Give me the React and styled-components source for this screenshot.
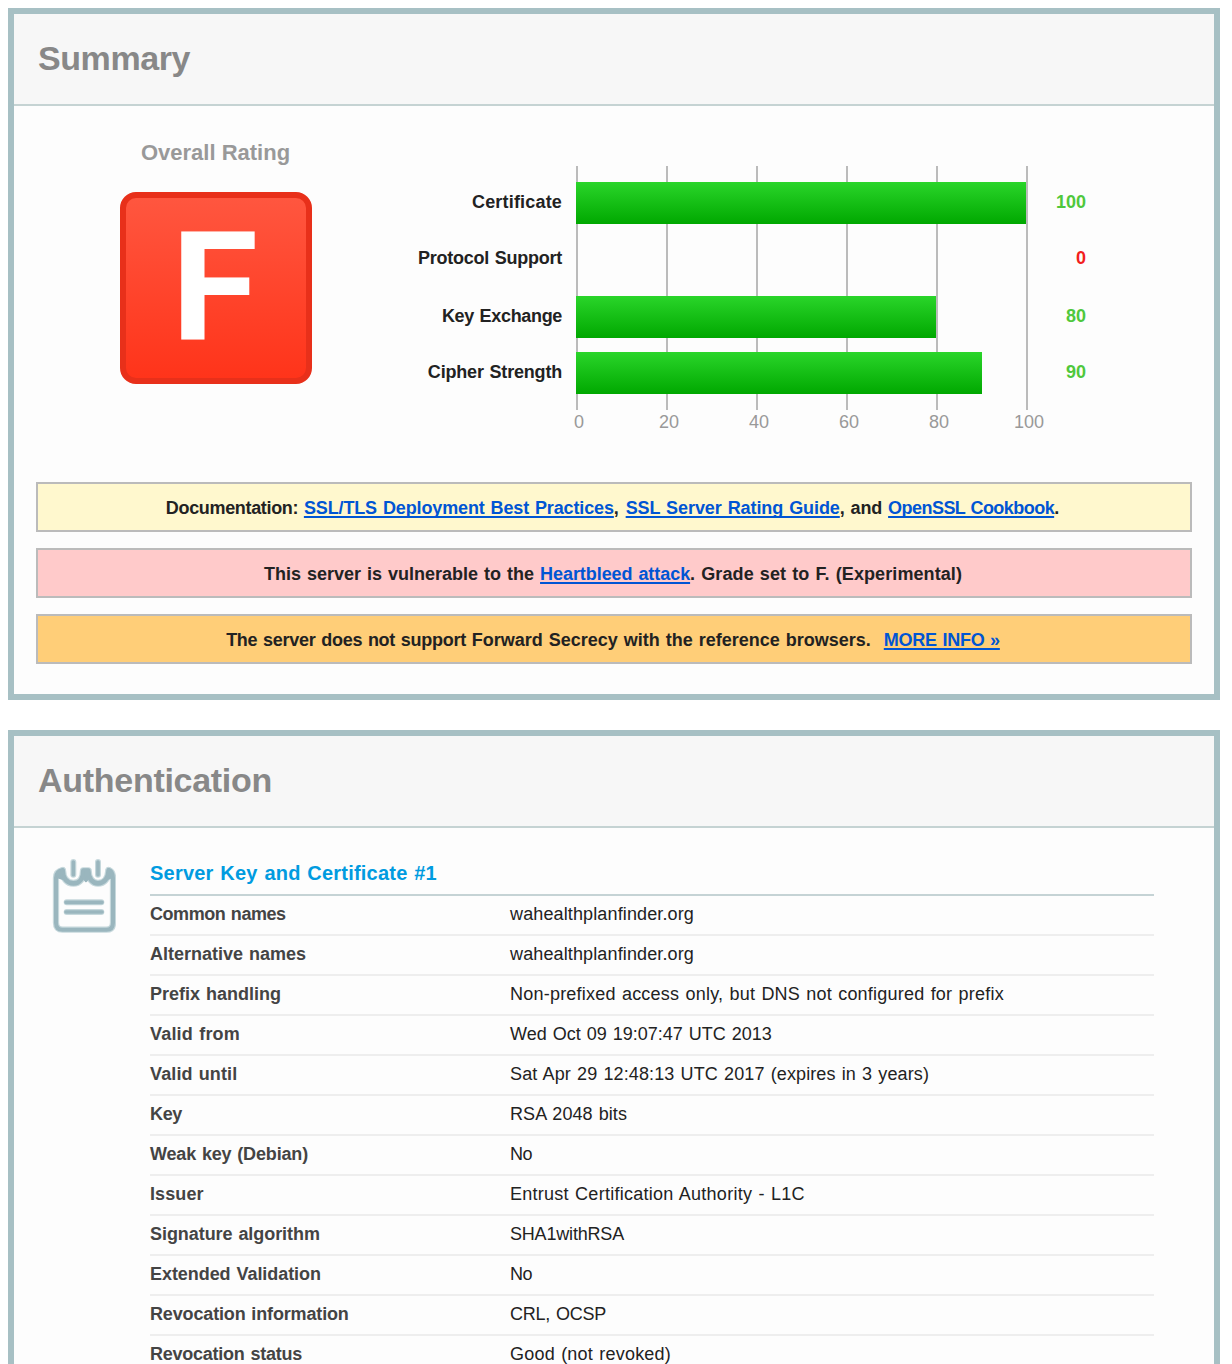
import React from "react";
import styled, { createGlobalStyle } from "styled-components";

const GlobalStyle = createGlobalStyle`
  * { box-sizing: border-box; }
  body {
    margin: 0;
    background: #fff;
    color: #222;
    font-family: "Liberation Sans", Arial, Helvetica, sans-serif;
    font-size: 18px;
    word-spacing: 1px;
  }
`;

const Page = styled.main`
  display: flex;
  flex-direction: column;
  gap: 30px;
  width: 1232px;
  height: 1364px;
  padding: 8px 12px 0 8px;
  overflow: hidden;
`;

const Panel = styled.section`
  flex: none;
  border: 6px solid #a7c0c4;
  background: #fdfdfd;
`;

const PanelTitle = styled.h2`
  margin: 0;
  padding: 0 24px 2px;
  border-bottom: 2px solid #c5d3d3;
  background: #f7f7f7;
  color: #888;
  font-size: 34px;
  line-height: 88px;
  letter-spacing: ${(p) => p.$tracking}px;
`;

const Tracked = styled.span`
  letter-spacing: ${(p) => p.$tracking || 0}px;
`;

/* Summary */

const SummaryBody = styled.div`
  padding: 30px 22px;
`;

const Overview = styled.div`
  display: flex;
  height: 346px;
  padding-left: 84px;
`;

const Rating = styled.div`
  display: flex;
  flex-direction: column;
  align-items: center;
  width: 192px;
`;

const RatingTitle = styled.div`
  margin-bottom: 22px;
  padding-right: 1px;
  color: #999;
  font-size: 22px;
  font-weight: 700;
  line-height: 34px;
  white-space: nowrap;
  word-spacing: 0;
`;

const Grade = styled.div`
  display: flex;
  justify-content: center;
  width: 192px;
  height: 192px;
  border: 6px solid #e8301a;
  border-radius: 16px;
  background: linear-gradient(#ff563f, #ff341a);
  color: #fff;
`;

const GradeLetter = styled.span`
  padding-right: 2px;
  font-family: Roboto, "Liberation Sans", sans-serif;
  font-size: 152px;
  font-weight: 700;
  line-height: 180px;
  transform: scaleX(1.04);
`;

const Chart = styled.div`
  display: flex;
  width: 774px;
  padding-top: 30px;
`;

const BarColumn = styled.div`
  display: flex;
  flex-direction: column;
  padding-top: 16px;
  width: ${(p) => p.$width}px;
  text-align: right;
  font-weight: 700;
`;

const BarCell = styled.div`
  height: 42px;
  margin-bottom: ${(p) => p.$gap}px;
  line-height: 40px;
  color: ${(p) => p.$color || "inherit"};
`;

const PlotColumn = styled.div`
  width: 452px;
  margin-left: 14px;
`;

const Plot = styled.div`
  height: 244px;
  padding-top: 16px;
  background: repeating-linear-gradient(to right, #bbb 0 2px, transparent 2px 90px);
`;

const Bar = styled.div`
  width: ${(p) => p.$width}px;
  height: 42px;
  margin-bottom: ${(p) => p.$gap}px;
  background: linear-gradient(#2ad52a, #00a800);
`;

const Axis = styled.div`
  display: flex;
  width: 540px;
  margin-left: -42px;
  color: #999;
  line-height: 25px;
`;

const Tick = styled.span`
  width: 90px;
  flex: none;
  text-align: center;
`;

const Notice = styled.div`
  height: 50px;
  margin-top: ${(p) => (p.$first ? 0 : 16)}px;
  padding: 2px ${(p) => (p.$first ? 3 : 2)}px 0 0;
  border: 2px solid #bbb;
  background: ${(p) => p.$color};
  font-weight: 700;
  line-height: 44px;
  text-align: center;
  white-space: pre;
`;

const Link = styled.a`
  color: #0055d4;
  letter-spacing: ${(p) => p.$tracking || 0}px;
  margin-left: ${(p) => p.$indent || 0}px;
  text-decoration: underline;
  text-decoration-thickness: 2px;
  text-underline-offset: 2px;
  text-decoration-skip-ink: none;
`;

/* Authentication */

const AuthBody = styled.div`
  display: flex;
  padding: 28px 60px 30px 38px;
`;

const NotepadIcon = styled.svg`
  flex: none;
  width: 64px;
  height: 74px;
  margin: 3px 34px 0 0;
`;

const Details = styled.div`
  flex: 1;
`;

const DetailsTitle = styled.h3`
  margin: 0;
  padding-bottom: 4px;
  border-bottom: 2px solid #c5d3d5;
  color: #009be0;
  font-size: 20px;
  line-height: 34px;
  letter-spacing: 0.21px;
`;

const DetailRow = styled.div`
  display: grid;
  grid-template-columns: 360px 1fr;
  padding-bottom: 2px;
  border-bottom: 2px solid #eee;
  line-height: 36px;
`;

const DetailLabel = styled(Tracked)`
  color: #444;
  font-weight: 700;
`;

const scores = [
  { label: "Certificate", tracking: 0.18, value: 100, width: 450, gap: 14 },
  { label: "Protocol Support", tracking: -0.25, value: 0, width: 0, gap: 16 },
  { label: "Key Exchange", tracking: -0.33, value: 80, width: 360, gap: 14 },
  { label: "Cipher Strength", tracking: -0.19, value: 90, width: 406, gap: 0 },
];

const details = [
  ["Common names", -0.45, "wahealthplanfinder.org", 0.13],
  ["Alternative names", 0, "wahealthplanfinder.org", 0.13],
  ["Prefix handling", 0, "Non-prefixed access only, but DNS not configured for prefix", 0.22],
  ["Valid from", 0.2, "Wed Oct 09 19:07:47 UTC 2013", 0],
  ["Valid until", 0.12, "Sat Apr 29 12:48:13 UTC 2017 (expires in 3 years)", 0.12],
  ["Key", -0.34, "RSA 2048 bits", 0.07],
  ["Weak key (Debian)", -0.16, "No", -0.5],
  ["Issuer", 0.1, "Entrust Certification Authority - L1C", 0.26],
  ["Signature algorithm", -0.06, "SHA1withRSA", -0.19],
  ["Extended Validation", -0.06, "No", -0.5],
  ["Revocation information", -0.15, "CRL, OCSP", -0.22],
  ["Revocation status", -0.24, "Good (not revoked)", 0.22],
];

const padBody =
  "M98 90 Q78 94 78 114 V248 Q78 269 98 269 H229 Q249 269 249 248 V114 Q249 94 236 90";
const padBindings =
  "M98 92 C99 116 112 130 130 130 C148 130 160 116 160 92 H175 C175 116 188 130 204 130 C222 130 234 116 236 92";

function Notepad() {
  return (
    <NotepadIcon viewBox="66 57 192 222" fill="none" strokeLinecap="round" strokeLinejoin="round">
      <g stroke="#c6d8dc">
        <path d={padBody} strokeWidth="19" />
        <path d={padBindings} strokeWidth="21" />
        <path d="M110 187H214M110 216H214" strokeWidth="18" />
      </g>
      <path d="M130 64V104M204 64V104" stroke="#fdfdfd" strokeWidth="26" />
      <path d="M130 66V104M204 66V104" stroke="#c6d8dc" strokeWidth="18" />
      <g stroke="#9ab6be">
        <path d={padBody} strokeWidth="12" />
        <path d={padBindings} strokeWidth="14" />
        <path d="M82 112L98 92L102 118ZM245 112L236 94L230 118Z" fill="#9ab6be" strokeWidth="6" />
        <path d="M160 91H175V112L168 122L160 112Z" fill="#9ab6be" strokeWidth="9" />
        <path d="M130 66V104M204 66V104M108 187H216M108 216H216" strokeWidth="11" />
      </g>
    </NotepadIcon>
  );
}

export default function App() {
  return (
    <>
      <GlobalStyle />
      <Page>
        <Panel>
          <PanelTitle $tracking={-0.42}>Summary</PanelTitle>
          <SummaryBody>
            <Overview>
              <Rating>
                <RatingTitle>Overall Rating</RatingTitle>
                <Grade>
                  <GradeLetter>F</GradeLetter>
                </Grade>
              </Rating>
              <Chart>
                <BarColumn $width={250}>
                  {scores.map((s) => (
                    <BarCell key={s.label} $gap={s.gap}>
                      <Tracked $tracking={s.tracking}>{s.label}</Tracked>
                    </BarCell>
                  ))}
                </BarColumn>
                <PlotColumn>
                  <Plot>
                    {scores.map((s) => (
                      <Bar key={s.label} $width={s.width} $gap={s.gap} />
                    ))}
                  </Plot>
                  <Axis>
                    {[0, 20, 40, 60, 80, 100].map((n) => (
                      <Tick key={n}>{n}</Tick>
                    ))}
                  </Axis>
                </PlotColumn>
                <BarColumn $width={58}>
                  {scores.map((s) => (
                    <BarCell key={s.label} $gap={s.gap} $color={s.value ? "#4fc83c" : "#f2201c"}>
                      {s.value}
                    </BarCell>
                  ))}
                </BarColumn>
              </Chart>
            </Overview>
            <Notice $first $color="#fff8ce">
              <Tracked $tracking={-0.33}>Documentation: </Tracked>
              <Link $tracking={-0.125}>SSL/TLS Deployment Best Practices</Link>
              <Tracked $tracking={0.4}>, </Tracked>
              <Link $tracking={-0.07}>SSL Server Rating Guide</Link>
              <Tracked $tracking={-0.12}>, and </Tracked>
              <Link $tracking={-0.54}>OpenSSL Cookbook</Link>.
            </Notice>
            <Notice $color="#ffcaca">
              This server is vulnerable to the <Link $tracking={-0.06}>Heartbleed attack</Link>
              <Tracked $tracking={0.09}>. Grade set to F. (Experimental)</Tracked>
            </Notice>
            <Notice $color="#ffce78">
              <Tracked $tracking={-0.27}>{"The server does not support "}</Tracked>
              <Tracked>Forward Secrecy with the reference browsers.</Tracked>
              <Link $tracking={-0.27} $indent={13}>MORE INFO »</Link>
            </Notice>
          </SummaryBody>
        </Panel>
        <Panel>
          <PanelTitle $tracking={-0.285}>Authentication</PanelTitle>
          <AuthBody>
            <Notepad />
            <Details>
              <DetailsTitle>Server Key and Certificate #1</DetailsTitle>
              {details.map(([label, labelTracking, value, valueTracking]) => (
                <DetailRow key={label}>
                  <DetailLabel $tracking={labelTracking}>{label}</DetailLabel>
                  <Tracked $tracking={valueTracking}>{value}</Tracked>
                </DetailRow>
              ))}
            </Details>
          </AuthBody>
        </Panel>
      </Page>
    </>
  );
}
